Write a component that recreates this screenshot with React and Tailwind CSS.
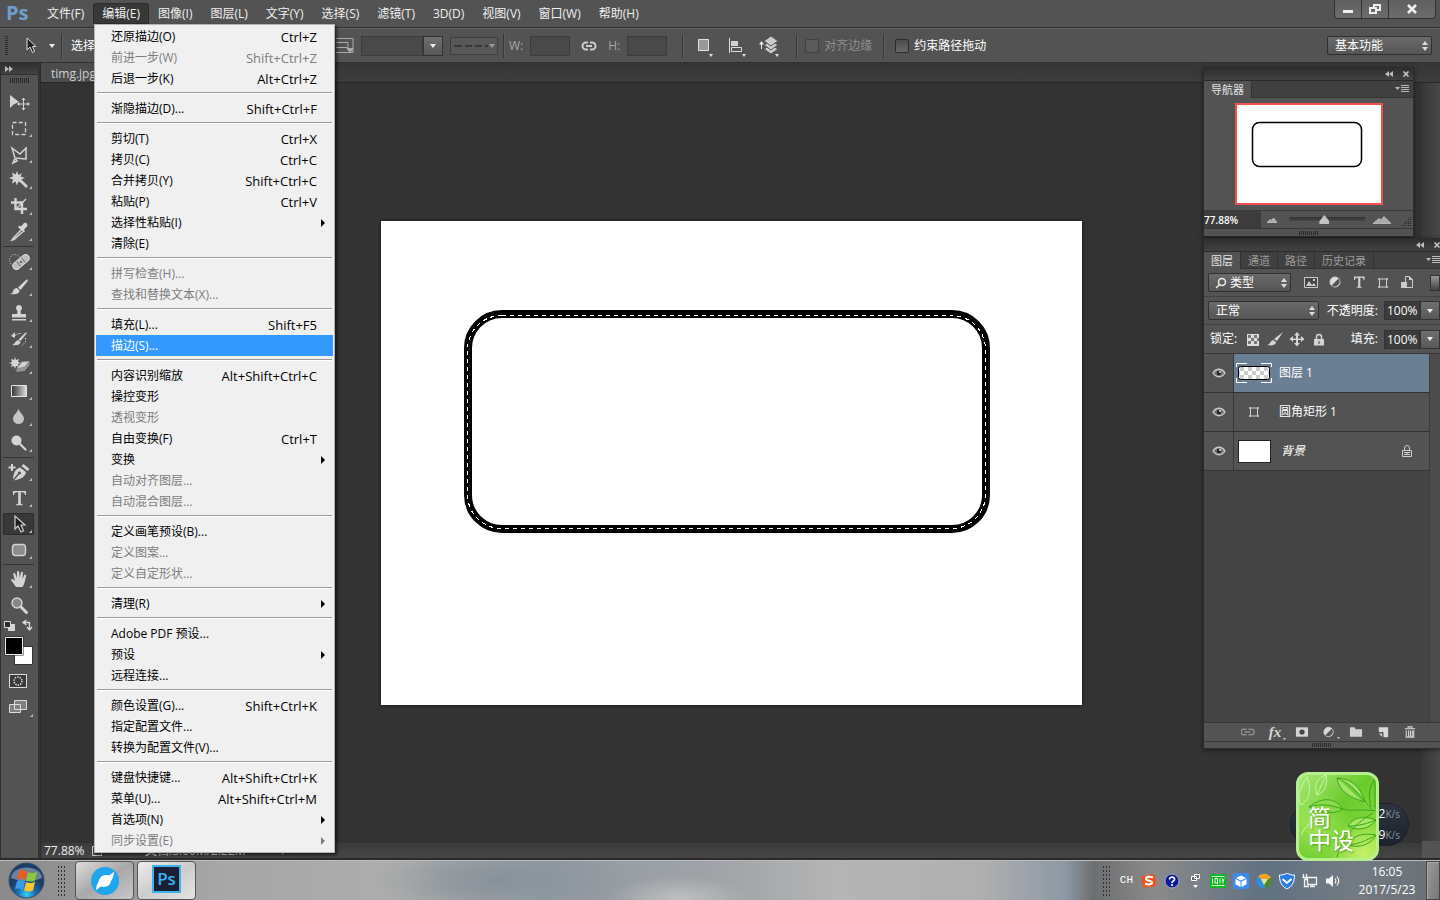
import { useState } from 'react'
import clsx from 'clsx'

const MENUS = ['文件(F)', '编辑(E)', '图像(I)', '图层(L)', '文字(Y)', '选择(S)', '滤镜(T)', '3D(D)', '视图(V)', '窗口(W)', '帮助(H)']

const EDIT_MENU = [
  [
    { label: '还原描边(O)', keys: 'Ctrl+Z' },
    { label: '前进一步(W)', keys: 'Shift+Ctrl+Z', disabled: true },
    { label: '后退一步(K)', keys: 'Alt+Ctrl+Z' },
  ],
  [{ label: '渐隐描边(D)...', keys: 'Shift+Ctrl+F' }],
  [
    { label: '剪切(T)', keys: 'Ctrl+X' },
    { label: '拷贝(C)', keys: 'Ctrl+C' },
    { label: '合并拷贝(Y)', keys: 'Shift+Ctrl+C' },
    { label: '粘贴(P)', keys: 'Ctrl+V' },
    { label: '选择性粘贴(I)', sub: true },
    { label: '清除(E)' },
  ],
  [
    { label: '拼写检查(H)...', disabled: true },
    { label: '查找和替换文本(X)...', disabled: true },
  ],
  [{ label: '填充(L)...', keys: 'Shift+F5' }, { label: '描边(S)...', active: true }],
  [
    { label: '内容识别缩放', keys: 'Alt+Shift+Ctrl+C' },
    { label: '操控变形' },
    { label: '透视变形', disabled: true },
    { label: '自由变换(F)', keys: 'Ctrl+T' },
    { label: '变换', sub: true },
    { label: '自动对齐图层...', disabled: true },
    { label: '自动混合图层...', disabled: true },
  ],
  [
    { label: '定义画笔预设(B)...' },
    { label: '定义图案...', disabled: true },
    { label: '定义自定形状...', disabled: true },
  ],
  [{ label: '清理(R)', sub: true }],
  [{ label: 'Adobe PDF 预设...' }, { label: '预设', sub: true }, { label: '远程连接...' }],
  [
    { label: '颜色设置(G)...', keys: 'Shift+Ctrl+K' },
    { label: '指定配置文件...' },
    { label: '转换为配置文件(V)...' },
  ],
  [
    { label: '键盘快捷键...', keys: 'Alt+Shift+Ctrl+K' },
    { label: '菜单(U)...', keys: 'Alt+Shift+Ctrl+M' },
    { label: '首选项(N)', sub: true },
    { label: '同步设置(E)', sub: true, disabled: true },
  ],
]

function Grip({ className }) {
  return (
    <span
      className={clsx(
        'block bg-[repeating-linear-gradient(90deg,#2a2a2a_0_1px,transparent_1px_2px)]',
        className,
      )}
    />
  )
}

function Divider() {
  return <span className="h-6 w-px shrink-0 bg-[#383838] shadow-[1px_0_0_#5e5e5e]" />
}

function UpDown({ className }) {
  return (
    <svg viewBox="0 0 6 10" className={clsx('pointer-events-none h-[10px] w-[6px] fill-[#dcdcdc]', className)}>
      <path d="M3 0 6 4H0zM3 10 6 6H0z" />
    </svg>
  )
}

function PanelSelect({ label, value, className, pad = 'pl-[7px]', children }) {
  return (
    <div className={clsx('relative flex h-[19px] items-center', className)}>
      {children}
      <select
        aria-label={label}
        className={clsx(
          'h-full w-full appearance-none rounded-xs border border-[#303030] bg-linear-to-b from-[#6a6a6a] to-[#555] pr-4 text-white outline-none',
          pad,
        )}
        defaultValue={value}
      >
        <option>{value}</option>
      </select>
      <UpDown className="absolute right-1" />
    </div>
  )
}

function MenuBar() {
  return (
    <header className="flex h-7 shrink-0 items-start border-b border-[#303030] bg-[#535353]">
      <span className="w-[39px] pl-1.5 text-xl leading-[26px] font-bold text-[#6f9fd0]">Ps</span>
      <nav className="flex flex-1 gap-0.5 pt-1">
        {MENUS.map((name) => (
          <button
            key={name}
            className={clsx(
              'h-[19px] shrink-0 rounded-t-xs px-2 leading-[19px] text-[#f0f0f0]',
              name === '编辑(E)' && 'bg-[#383838] shadow-[0_0_0_1px_#2e2e2e]',
            )}
          >
            {name}
          </button>
        ))}
      </nav>
      <div className="mr-1 flex h-[19px] divide-x divide-[#333] rounded-b-sm border border-t-0 border-[#333] bg-linear-to-b from-[#606060] to-[#6c6c6c]">
        <button aria-label="最小化" className="flex w-[27px] items-center justify-center">
          <svg viewBox="0 0 12 10" className="h-[10px] w-3 fill-[#eee]"><path d="M1 6h10v3H1z" /></svg>
        </button>
        <button aria-label="还原" className="flex w-[27px] items-center justify-center">
          <svg viewBox="0 0 12 10" className="h-[10px] w-3 fill-none stroke-[#eee] stroke-2">
            <path d="M5 5V1h6v5H8M1 4h6v5H1z" />
          </svg>
        </button>
        <button aria-label="关闭" className="flex w-[46px] items-center justify-center">
          <svg viewBox="0 0 12 10" className="h-[10px] w-3 stroke-[#eee] stroke-[2.6]"><path d="m2 1 8 8M10 1 2 9" /></svg>
        </button>
      </div>
    </header>
  )
}

function Tick() {
  return <svg viewBox="0 0 4 3" className="absolute right-0 bottom-0 h-[3px] w-1 fill-[#ddd]"><path d="M0 0h4L2 3z" /></svg>
}

function OptionsBar() {
  return (
    <section className="flex h-[35px] shrink-0 items-center border-t border-b border-t-[#646464] border-b-[#303030] bg-[#535353] pr-2">
      <span className="ml-[5px] h-[19px] w-[3px] bg-[repeating-linear-gradient(#2e2e2e_0_1px,transparent_1px_2px)]" />
      <button aria-label="路径选择工具" className="ml-[17px] flex w-[31px] items-center justify-between">
        <svg viewBox="0 0 12 18" className="h-[18px] w-3 fill-[#222] stroke-[#ddd]">
          <path d="M2 1v12l3-3 2.500 5.500 2-1L7.500 9.500H11z" />
        </svg>
        <svg viewBox="0 0 6 4" className="mr-px h-1 w-1.5 fill-[#eee]"><path d="M0 0h6L3 4z" /></svg>
      </button>
      <span className="mx-[5px] flex"><Divider /></span>
      <span className="w-[270px] shrink-0 pl-[4px] text-white">选择:</span>
      <svg viewBox="0 0 20 17" className="-ml-0.5 h-[17px] w-5 shrink-0 fill-none stroke-[#aaa]">
        <path d="M1 1.500h17v14H1M1 5.500h12v5H1" />
        <path d="M12 11.500h6l-3 4z" fill="#aaa" />
      </svg>
      <div className="ml-[6px] flex h-5 shrink-0">
        <input aria-label="描边宽度" className="w-[62px] border border-[#3c3c3c] bg-[#494949] px-1 text-white outline-none" />
        <button aria-label="描边宽度选项" className="flex w-5 items-center justify-center border border-[#333] bg-linear-to-b from-[#707070] to-[#585858]">
          <svg viewBox="0 0 6 4" className="h-1 w-1.5 fill-[#eee]"><path d="M0 0h6L3 4z" /></svg>
        </button>
      </div>
      <button aria-label="描边类型" className="ml-[7px] flex h-[18px] w-12 shrink-0 items-center justify-center rounded-xs border border-[#3e3e3e] bg-[#585858]">
        <svg viewBox="0 0 42 6" className="h-1.5 w-[42px] fill-[#999]">
          <path d="M1 2h8v2H1zM12 2h7v2h-7zM22 2h7v2h-7zM32 2h3v2h-3z" fill="#383838" />
          <path d="M36 1h6l-3 4z" />
        </svg>
      </button>
      <span className="mx-[5px] flex"><Divider /></span>
      <label className="flex shrink-0 items-center gap-[7px] text-[#a8a8a8]">
        W:
        <input className="h-5 w-10 border border-[#3c3c3c] bg-[#494949] text-white outline-none" />
      </label>
      <svg viewBox="0 0 16 10" className="mx-[11px] h-[10px] w-4 shrink-0 fill-none stroke-[#ccc] stroke-2">
        <path d="M7 1.500H5a3.500 3.500 0 0 0 0 7h2M9 1.500h2a3.500 3.500 0 0 1 0 7H9M5 5h6" />
      </svg>
      <label className="flex shrink-0 items-center gap-[7px] text-[#a8a8a8]">
        H:
        <input className="h-5 w-10 border border-[#3c3c3c] bg-[#494949] text-white outline-none" />
      </label>
      <span className="mr-[10px] ml-[15px] flex"><Divider /></span>
      <button aria-label="路径操作" className="relative h-[22px] w-5 shrink-0">
        <svg viewBox="0 0 20 20" className="h-5 w-5"><path d="M5.500 3.500h10v11h-10z" fill="#999" stroke="#e0e0e0" /></svg>
        <Tick />
      </button>
      <button aria-label="路径对齐方式" className="relative ml-[13px] h-[22px] w-5 shrink-0">
        <svg viewBox="0 0 20 20" className="h-5 w-5 fill-none stroke-[#ddd]">
          <path d="M3.500 2v15M5.500 5.500h6v4h-6z" fill="#ccc" /><path d="M5.500 11.500h10v4h-10z" />
        </svg>
        <Tick />
      </button>
      <button aria-label="路径排列方式" className="relative ml-[13px] h-[22px] w-5 shrink-0">
        <svg viewBox="0 0 20 20" className="h-5 w-5 fill-[#ccc] stroke-[#555]">
          <path d="m12 9 7 4-7 5-7-5z" /><path d="m12 5 7 4-7 5-7-5z" /><path d="m12 0 7 5-7 5-7-5z" />
          <path d="M0 8.500 2.500 5 5 8.500H3V13H2V8.500z" fill="#eee" stroke="none" />
        </svg>
        <Tick />
      </button>
      <span className="mr-[8px] ml-[17px] flex"><Divider /></span>
      <label className="flex shrink-0 items-center gap-[5px] text-[#8e8e8e]">
        <input type="checkbox" disabled className="h-3.5 w-3.5 appearance-none rounded-xs border border-[#404040] bg-[#5a5a5a]" />
        对齐边缘
      </label>
      <span className="mx-[11px] flex"><Divider /></span>
      <label className="flex shrink-0 items-center gap-[5px] text-white">
        <input type="checkbox" className="h-3.5 w-3.5 appearance-none rounded-xs border border-[#2c2c2c] bg-linear-to-b from-[#4c4c4c] to-[#686868]" />
        约束路径拖动
      </label>
      <div className="flex-1" />
      <PanelSelect label="工作区" value="基本功能" className="w-[105px]" />
    </section>
  )
}

const L = '#d4d4d4'

const TOOL_GROUPS = [
  [
    {
      name: '移动工具',
      plain: true,
      icon: (
        <>
          <path d="M3 5v13l3.500-3.500L12 12z" fill={L} />
          <path d="M16.500 9v10M11.500 14h10" stroke={L} fill="none" />
          <path d="m16.500 7.500 2 2.500h-4zM16.500 20.500l2-2.500h-4zM10 14l2.500-2v4zM23 14l-2.500-2v4z" fill={L} />
        </>
      ),
    },
    { name: '矩形选框工具', icon: <path d="M5.500 6.500h13v12h-13z" fill="none" stroke={L} strokeWidth="1.300" strokeDasharray="4 2.250" /> },
    {
      name: '多边形套索工具',
      icon: <path d="m5 6 8 6 6-6v11l-11-1zM8 16l2 3-4 2 1.500-4" fill="none" stroke={L} strokeWidth="1.500" />,
    },
    {
      name: '魔棒工具',
      icon: (
        <>
          <path d="m13 12 7 7" stroke={L} strokeWidth="2.600" />
          <path d="m10 3 1.500 4L15 5l-1.500 3.500L18 10l-4 1.500 1.500 4-4-2-1.500 4-1.500-4-3.500 2 1-4-4-1.500 4-1.500-1-4 3.500 2z" fill={L} />
        </>
      ),
    },
    {
      name: '裁剪工具',
      icon: <><path d="M8.500 4v11H20M4 8.500h11V20" fill="none" stroke={L} strokeWidth="2.400" /><path d="M9 15 19 5" stroke={L} strokeWidth="1.200" /></>,
    },
    {
      name: '吸管工具',
      icon: (
        <>
          <path d="m14 10-8 8.500-1 1.500 2-.5L15.500 12" fill="none" stroke={L} strokeWidth="1.500" />
          <path d="m11 7 1.500-1.500 1.500 1 2.500-3c2-2 5 .5 3.500 3l-3 3 1 1.500-1.500 1.500z" fill={L} />
        </>
      ),
    },
  ],
  [
    {
      name: '污点修复画笔工具',
      icon: (
        <>
          <circle cx="8" cy="11" r="5.500" fill="none" stroke={L} strokeDasharray="1 1.500" />
          <g transform="rotate(-40 14 13)">
            <rect x="4.500" y="9.500" width="19" height="7" rx="3.500" fill="#bbb" stroke="#e2e2e2" />
            <path d="M11 10v6M17 10v6" stroke="#777" />
            <circle cx="14" cy="13" r="1" fill="#555" />
          </g>
        </>
      ),
    },
    {
      name: '画笔工具',
      icon: <path d="M20.500 4.500c.8.600.3 1.500-.5 2.500l-6.500 8-2.500-2.500 8-7.500c.5-.5 1-.8 1.500-.5zM10 13l2.500 2.500c0 3-3 4.500-9.500 3.500 3-.5 2.500-2 3.500-4 .8-1.500 2.500-2.200 3.500-2z" fill={L} />,
    },
    {
      name: '仿制图章工具',
      icon: <path d="M12 4a3 3 0 0 1 2 5.300c-.6 1-.6 2 0 3.700h5v3.500H5V13h5c.6-1.700.6-2.700 0-3.700A3 3 0 0 1 12 4zM5 18h14v1.500H5z" fill={L} />,
    },
    {
      name: '历史记录画笔工具',
      icon: (
        <>
          <path d="m20 6-6.500 8-2-1.500 7-7zM11 13l2.500 2c0 2.500-3.500 4-8.500 3 2.500-.5 2.500-3 6-5zM4 9l4-4v3c3-2 6-2 8-1-4-.5-6 .5-8 2v2z" fill={L} />
          <path d="M18.500 11v4l-4 4" fill="none" stroke={L} strokeDasharray="1.500 1.500" />
        </>
      ),
    },
    {
      name: '橡皮擦工具',
      icon: (
        <>
          <path d="m8 4 1 3 3-1-1 3 3 1-3 1 1 3-3-1-1 3-1-3-3 1 1-3-3-1 3-1-1-3 3 1z" fill={L} />
          <path d="m15 8.500 7.500-.5-5 6.500-8 1z" fill="#d0d0d0" stroke="#5a5a5a" strokeWidth=".5" />
          <path d="m9.500 15.500 8-1 5-6.500v4l-5 6-8 1z" fill="#969696" />
        </>
      ),
    },
    {
      name: '渐变工具',
      icon: (
        <>
          <defs>
            <linearGradient id="tool-gradient"><stop stopColor="#333" /><stop offset="1" stopColor="#ddd" /></linearGradient>
          </defs>
          <path d="M4.500 6.500h15v11h-15z" fill="url(#tool-gradient)" stroke="#e4e4e4" />
        </>
      ),
    },
    { name: '模糊工具', icon: <path d="M11.500 4c2 4.500 5.500 6.500 5.500 9.500a5.500 5.500 0 0 1-11 0c0-3 3.500-5 5.500-9.500z" fill="#c4c4c4" /> },
    {
      name: '减淡工具',
      icon: <><circle cx="9.500" cy="9.500" r="5" fill={L} /><path d="m13 13 5.500 5.500" stroke={L} strokeWidth="2.200" strokeLinecap="round" /></>,
    },
  ],
  [
    {
      name: '钢笔工具',
      icon: (
        <>
          <path d="M1.500 7.500h7M5 4v7" stroke={L} strokeWidth="2" />
          <path d="m16.500 4 6 5-2 2-6-5zM13 7.500l6 4.500c-.5 4-4 7-12 8.500l5-6a1.500 1.500 0 1 0-1-1l-5 6c.5-6 2-10.500 7-12z" fill={L} />
        </>
      ),
    },
    {
      name: '横排文字工具',
      icon: <path d="M6 5h13v4h-1c-.3-2-1-2.700-3-2.700h-1.200V17c0 1 .5 1.200 2 1.300v.9H9v-.9c1.700-.1 2.200-.3 2.200-1.300V6.300H10C8 6.300 7.300 7 7 9H6z" fill={L} />,
    },
    {
      name: '路径选择工具',
      selected: true,
      icon: <path d="M8 4v13l3-3 3 6 2.500-1.200L14 13h4z" fill="#1e1e1e" stroke={L} strokeWidth="1.200" />,
    },
    { name: '圆角矩形工具', icon: <rect x="5.500" y="6.500" width="13" height="11" rx="3" fill="#8c8c8c" stroke={L} strokeWidth="1.400" /> },
  ],
  [
    {
      name: '抓手工具',
      icon: <path d="M9 20c-1.500-2.500-4-5-5-7.500 1.500-1.200 2.500.2 4 1.700L6.200 7c0-1.500 1.800-1.500 2.200 0l1.400 4L10 5c0-1.500 2-1.500 2.200 0l.5 6 1.300-5.500c.4-1.300 2-1 2 .3l-.6 6 2-3.800c.7-1.200 2-.5 1.700.7-1 4.500-1.300 7.800-3.600 11.300z" fill={L} />,
    },
    {
      name: '缩放工具',
      plain: true,
      icon: <><circle cx="10" cy="10" r="5" fill="#888" stroke={L} strokeWidth="1.400" /><path d="m14 14 5.500 5.500" stroke={L} strokeWidth="3" strokeLinecap="round" /></>,
    },
  ],
]

function ToolPanel() {
  return (
    <aside className="flex w-[38px] shrink-0 flex-col border-l border-[#303030] bg-[#535353]">
      <div className="h-3 shrink-0 border-b border-[#303030] bg-linear-to-b from-[#2e2e2e] to-[#424242] pl-1">
        <svg viewBox="0 0 8 6" className="mt-[3px] h-1.5 w-2 fill-[#bbb]"><path d="m0 0 4 3-4 3zM4 0l4 3-4 3z" /></svg>
      </div>
      <Grip className="mt-[3px] mb-2 ml-[9px] h-[5px] w-[19px] shrink-0" />
      {TOOL_GROUPS.map((group, index) => (
        <div
          key={group[0].name}
          className={clsx(
            'mr-[4px] ml-[2px] flex shrink-0 flex-col gap-1',
            index > 0 && 'mt-[3px] border-t border-[#333] pt-[3px]',
          )}
        >
          {group.map((tool) => (
            <button
              key={tool.name}
              aria-label={tool.name}
              className={clsx(
                'relative flex h-[22px] items-center justify-center rounded-xs',
                tool.selected && 'bg-[#383838] shadow-[inset_0_0_0_1px_#2b2b2b]',
              )}
            >
              <svg viewBox="0 0 24 24" className="h-6 w-6 shrink-0">{tool.icon}</svg>
              {!tool.plain && (
                <svg viewBox="0 0 4 4" className="absolute right-0.5 bottom-0.5 h-[3px] w-[3px] fill-[#bbb]"><path d="M4 0v4H0z" /></svg>
              )}
            </button>
          ))}
        </div>
      ))}
      <svg viewBox="1 0 37 50" className="mt-[3px] h-[50px] w-[37px] shrink-0">
        <path d="M8 5h7v7H8z" fill="#d6d6d6" />
        <path d="M4.500 2.500h6v6h-6z" fill="#2c2c2c" stroke="#ddd" />
        <path d="M24 3.500h5.500V10M26.500 1 23 3.500 26.500 6M27 8l2.500 3L32 8" fill="none" stroke="#ddd" strokeWidth="1.300" />
        <path d="M14.500 27.500h18v18h-18z" fill="#fff" stroke="#333" />
        <path d="M4.500 17.500h19v19h-19z" fill="#222" />
        <path d="M5.500 18.500h17v17h-17z" fill="#000" stroke="#eee" />
      </svg>
      <button aria-label="以快速蒙版模式编辑" className="mt-1 ml-[2px] flex h-4 w-[30px] items-center justify-center">
        <svg viewBox="0 0 18 14" className="h-3.5 w-[18px]">
          <path d="M.5.500h17v13H.5z" fill="#3a3a3a" stroke="#ddd" /><circle cx="9" cy="7" r="4" fill="none" stroke="#eee" strokeWidth="1.400" strokeDasharray="1.400 1.100" />
        </svg>
      </button>
      <button aria-label="更改屏幕模式" className="relative mt-[8px] ml-[2px] flex h-[20px] w-[30px] items-center justify-center">
        <svg viewBox="0 0 20 16" className="h-4 w-5 fill-[#808080] stroke-[#ddd]">
          <path d="M1.500 5.500h11v8h-11zM6.500 1.500h12v9h-12z" />
        </svg>
        <svg viewBox="0 0 4 4" className="absolute right-0 bottom-0 h-[3px] w-[3px] fill-[#bbb]"><path d="M4 0v4H0z" /></svg>
      </button>
    </aside>
  )
}

function Artboard() {
  return (
    <svg viewBox="0 0 701 484" className="h-[484px] w-[701px] bg-white shadow-[0_0_3px_#111]">
      <rect x="87" y="93" width="518" height="215" rx="34" fill="none" stroke="#000" strokeWidth="8" />
      <rect x="86.500" y="94.500" width="518" height="213" rx="34" fill="none" stroke="#fff" strokeDasharray="4 4" shapeRendering="crispEdges" />
    </svg>
  )
}

function DocumentArea() {
  return (
    <main className="ml-[2px] flex min-w-0 flex-1 flex-col border-l border-[#2c2c2c] bg-[#333]">
      <div className="flex h-5 shrink-0 border-b border-[#282828] bg-linear-to-b from-[#363636] to-[#3c3c3c]">
        <span className="w-40 bg-[#4c4c4c] pl-[10px] leading-[22px] text-[#d0d0d0]">timg.jpg</span>
      </div>
      <div className="flex min-h-0 flex-1">
        <div className="flex min-w-0 flex-1 flex-col">
          <div className="flex min-h-0 flex-1 items-center justify-center"><Artboard /></div>
          <div className="flex h-[15px] shrink-0 items-center bg-linear-to-b from-[#3c3c3c] to-[#454545] pl-[3px] leading-[15px] text-[#eee]">
            <span className="w-12">77.88%</span>
            <svg viewBox="0 0 10 10" className="h-[10px] w-[10px] fill-none stroke-[#ccc]"><path d="M.5.500h9v9h-9z" /></svg>
            <span className="ml-[43px]">文档:3.00M/2.22M</span>
            <svg viewBox="0 0 4 8" className="ml-9 h-2 w-1 fill-[#ccc]"><path d="m0 0 4 4-4 4z" /></svg>
          </div>
        </div>
        <div className="flex w-[18px] shrink-0 flex-col justify-end bg-linear-to-r from-[#383838] to-[#484848]">
          <span className="h-[17px] bg-[#535353]" />
        </div>
      </div>
    </main>
  )
}

function EditMenu() {
  return (
    <ul
      role="menu"
      className="absolute top-6 left-[94px] z-20 w-[241px] border border-[#b4b4b4] bg-[#f0f0f0] p-px text-black shadow-[2px_2px_3px_rgba(0,0,0,0.6)]"
    >
      {EDIT_MENU.map((group, index) => (
        <li key={group[0].label} role="none">
          {index > 0 && <hr className="mx-px mt-[3px] mb-1 h-[2px] border-t border-b-0 border-[#9a9a9a] bg-white" />}
          {group.map((item) => (
            <button
              key={item.label}
              role="menuitem"
              className={clsx(
                'flex h-[21px] w-full items-center pr-4 pl-[15px] text-left leading-5',
                item.disabled && 'text-[#7d7d7d]',
                item.active && 'bg-[#3399ff] text-white',
                item.sub && 'pt-px',
              )}
            >
              <span className="flex-1">{item.label}</span>
              {item.keys && <span className="text-[13px]">{item.keys}</span>}
              {item.sub && (
                <svg viewBox="0 0 4 8" className="-mr-2 h-2 w-1 fill-current"><path d="m0 0 4 4-4 4z" /></svg>
              )}
            </button>
          ))}
        </li>
      ))}
    </ul>
  )
}

function PanelHeader() {
  return (
    <div className="flex h-[13px] items-center justify-end gap-2.5 border-b border-[#2a2a2a] bg-linear-to-b from-[#2e2e2e] to-[#424242] pr-1">
      <button aria-label="折叠为图标"><svg viewBox="0 0 8 6" className="h-1.5 w-2 fill-[#bbb]"><path d="M4 0v6L0 3zM8 0v6L4 3z" /></svg></button>
      <button aria-label="关闭面板">
        <svg viewBox="0 0 6 6" className="h-1.5 w-1.5 stroke-[#ccc] stroke-[1.5]"><path d="m.5.500 5 5M5.500.500l-5 5" /></svg>
      </button>
    </div>
  )
}

function PanelTabs({ tabs }) {
  return (
    <div className="flex h-[17px] border-b border-[#333] bg-[#404040] text-[11px] leading-[15px]">
      {tabs.map((tab, index) => (
        <button
          key={tab}
          className={clsx(
            'shrink-0 border-r border-[#333] px-[7px]',
            index === 0 ? 'h-[17px] bg-[#535353] text-[#e4e4e4]' : 'text-[#9c9c9c]',
          )}
        >
          {tab}
        </button>
      ))}
      <button aria-label="面板菜单" className="mr-1 ml-auto">
        <svg viewBox="0 0 14 8" className="h-2 w-3.5 fill-[#bbb]"><path d="M0 2h5L2.500 5zM6 0h8v1H6zM6 2h8v1H6zM6 4h8v1H6zM6 6h8v1H6z" /></svg>
      </button>
    </div>
  )
}

function NavigatorPanel() {
  return (
    <section className="absolute top-[67px] right-[26px] z-10 w-[211px] border border-[#2c2c2c] bg-[#535353] shadow-[0_1px_4px_rgba(0,0,0,0.5)]">
      <PanelHeader />
      <PanelTabs tabs={['导航器']} />
      <div className="flex h-[112px] items-center justify-center">
        <svg viewBox="0 0 148 102" className="h-[102px] w-[148px]">
          <path d="M1 1h146v100H1z" fill="#fff" stroke="#f05050" strokeWidth="2" />
          <rect x="17.500" y="19.500" width="109" height="44" rx="7" fill="none" stroke="#000" strokeWidth="1.500" />
        </svg>
      </div>
      <div className="flex h-[18px] items-center border-t border-[#3a3a3a]">
        <input aria-label="缩放比例" defaultValue="77.88%" className="h-full w-[57px] bg-[#3c3c3c] text-[10px] font-semibold text-white outline-none" />
        <svg viewBox="0 0 10 6" className="ml-1.5 h-1.5 w-2.5 fill-[#aaa] stroke-[#ddd] stroke-[.6]"><path d="m0 5.500 3-3 1.500 1L6.500 1 10 5.500z" /></svg>
        <input
          type="range"
          aria-label="导航器缩放"
          defaultValue="46"
          className="mx-3 h-[10px] w-[76px] appearance-none bg-[linear-gradient(transparent_2px,#333_2px,#484848_6px,transparent_6px)] [&::-webkit-slider-thumb]:h-[9px] [&::-webkit-slider-thumb]:w-[10px] [&::-webkit-slider-thumb]:appearance-none [&::-webkit-slider-thumb]:bg-[#c4c4c4] [&::-webkit-slider-thumb]:[clip-path:polygon(50%_0,100%_70%,100%_100%,0_100%,0_70%)]"
        />
        <svg viewBox="0 0 18 8" className="-ml-1 h-2 w-[18px] fill-[#aaa] stroke-[#ddd] stroke-[.6]"><path d="m0 7.500 6-5 2 1.500 3-3.500 7 7z" /></svg>
        <svg viewBox="0 0 9 9" className="mt-1 mr-0.5 ml-auto h-[9px] w-[9px] fill-[#222]">
          <path d="M8 0h1v1H8zM6 2h1v1H6zM8 2h1v1H8zM4 4h1v1H4zM6 4h1v1H6zM8 4h1v1H8zM2 6h1v1H2zM4 6h1v1H4zM6 6h1v1H6zM8 6h1v1H8zM0 8h1v1H0zM2 8h1v1H2zM4 8h1v1H4zM6 8h1v1H6zM8 8h1v1H8z" />
        </svg>
      </div>
      <div className="flex h-[8px] items-center justify-center border-t border-[#383838]"><Grip className="h-1 w-5" /></div>
    </section>
  )
}

function PercentField({ label }) {
  return (
    <>
      <label className="ml-auto flex shrink-0 items-center gap-1.5 text-white">
        {label}
        <input defaultValue="100%" className="h-[19px] w-[36px] border border-[#333] bg-[#3c3c3c] pl-[2px] text-white outline-none" />
      </label>
      <button aria-label={`${label}选项`} className="flex h-[19px] w-5 shrink-0 items-center justify-center border border-[#333] bg-linear-to-b from-[#707070] to-[#585858]">
        <svg viewBox="0 0 6 4" className="h-1 w-1.5 fill-[#eee]"><path d="M0 0h6L3 4z" /></svg>
      </button>
    </>
  )
}

const PathShape = () => (
  <g fill="none" stroke="#d0d0d0">
    <path d="M3.500 4v8h7V4z" />
    <path d="M2.500 3.500h1v1h-1zM10.500 3.500h1v1h-1zM2.500 11.500h1v1h-1zM10.500 11.500h1v1h-1z" fill="#555" />
  </g>
)

const FILTERS = [
  { name: '像素图层', icon: <><path d="M.5 2.500h13v10H.5z" fill="#444" stroke="#ccc" /><path d="m2 11 3-5 3 4 2-2 2 3zM9 4h2v2H9z" fill="#ccc" /></> },
  { name: '调整图层', icon: <><circle cx="7" cy="7" r="5" fill="#ddd" stroke="#ccc" /><path d="M10.500 3.500a5 5 0 0 1-7 7z" fill="#555" /></> },
  { name: '文字图层', icon: <path d="M2 1.500h10.500V5h-.8c-.3-1.700-1-2.200-2.500-2.200H8.300V11c0 .8.300 1 1.500 1.100v.7H4.700v-.7C5.900 12 6.200 11.800 6.200 11V2.800h-.9C3.800 2.800 3.100 3.300 2.800 5H2z" fill="#d4d4d4" /> },
  { name: '形状图层', icon: <PathShape /> },
  { name: '智能对象', icon: <><path d="M5.500 1.500h4l3 3v8h-7z" fill="#555" stroke="#ccc" /><path d="M1 7h6v6H1zM9 1v4h4z" fill="#ccc" /></> },
]

const LOCKS = [
  {
    name: '锁定透明像素',
    icon: (
      <>
        <path d="M1 2h12v12H1z" fill="#ddd" />
        <path d="M2 3h3v3H2zM8 3h3v3H8zM5 6h3v3H5zM11 6h2v3h-2zM2 9h3v3H2zM8 9h3v3H8z" fill="#777" />
      </>
    ),
  },
  { name: '锁定图像像素', icon: <path d="m15 0-6 9-3-2zM5 8l3 2c0 3-4 4-9 3 3 0 3-4 6-5z" fill="#d4d4d4" /> },
  { name: '锁定位置', icon: <path d="m7 0 3 3.500H8v3h3V4l3.500 3-3.500 3V8H8v3h2l-3 3.500L4 11h2V8H3v2L-.5 7 3 4v2.500h3v-3H4z" fill="#d4d4d4" /> },
  { name: '锁定全部', icon: <><path d="M4.500 8V5a2.500 2.500 0 0 1 5 0v3" fill="none" stroke="#d4d4d4" strokeWidth="1.500" /><path d="M2 7h10v6.500H2z" fill="#d4d4d4" /><path d="M6.500 9h1v3h-1z" fill="#444" /></> },
]

const LAYERS = [
  { name: '图层 1', kind: 'pixels', selected: true },
  { name: '圆角矩形 1', kind: 'shape' },
  { name: '背景', kind: 'background' },
]

const LAYER_ACTIONS = [
  { name: '链接图层', icon: <path d="M6 4H3a3 3 0 0 0 0 6h3M8 4h3a3 3 0 0 1 0 6H8M4 7h6" fill="none" stroke="#8c8c8c" strokeWidth="1.600" /> },
  { name: '添加图层样式', text: 'fx' },
  { name: '添加图层蒙版', icon: <><path d="M1 2h13v10H1z" fill="#d4d4d4" /><circle cx="7.500" cy="7" r="2.800" fill="#444" /></> },
  { name: '新建调整图层', tick: true, icon: <><circle cx="7" cy="7" r="5" fill="#d8d8d8" stroke="#ccc" /><path d="M10.500 3.500a5 5 0 0 1-7 7z" fill="#555" /></> },
  { name: '创建新组', icon: <path d="M1 2h5l1 2h7v8H1z" fill="#d0d0d0" /> },
  { name: '创建新图层', icon: <path d="M3 2h10v10.500H8V7H3zM3 8.500h3.500v3.500z" fill="#d8d8d8" /> },
  { name: '删除图层', icon: <path d="M2 3.500h11M5.500 3V1.500h4V3M3.500 5v7.500h8V5M6 5.500V12M8 5.500V12M10 5.500V12" fill="none" stroke="#d4d4d4" strokeWidth="1.200" /> },
]

function LayerThumb({ kind }) {
  if (kind === 'shape') {
    return <svg viewBox="0 0 14 16" className="mr-[18px] ml-[11px] h-4 w-3.5"><PathShape /></svg>
  }
  if (kind === 'background') {
    return <span className="mr-[10px] ml-[2px] h-[23px] w-[33px] border border-[#222] bg-white" />
  }
  return (
    <svg viewBox="0 0 36 20" className="mr-[7px] h-5 w-9">
      <defs>
        <pattern id="checker" width="8" height="8" patternUnits="userSpaceOnUse">
          <path d="M0 0h8v8H0z" fill="#fff" /><path d="M0 0h4v4H0zM4 4h4v4H4z" fill="#ccc" />
        </pattern>
      </defs>
      <rect x="2.500" y="3.500" width="31" height="13" rx="2" fill="url(#checker)" stroke="#000" />
      <path d="M.5 4V.500H11M25 .500h10.500V4M.5 15v4.500H11M25 19.500h10.500V15" fill="none" stroke="#fff" />
    </svg>
  )
}

function LayersPanel() {
  const [layers] = useState(LAYERS)
  return (
    <section className="absolute top-[238px] right-0 z-10 w-[237px] overflow-hidden border border-r-0 border-[#2c2c2c] bg-[#535353] shadow-[0_1px_4px_rgba(0,0,0,0.5)]">
      <div className="-mr-1"><PanelHeader /></div>
      <div className="-mr-1"><PanelTabs tabs={['图层', '通道', '路径', '历史记录']} /></div>
      <div className="flex h-7 items-center border-b border-[#424242] pl-1">
        <PanelSelect label="图层过滤" value="类型" className="w-[83px]" pad="pl-[21px]">
          <svg viewBox="0 0 12 12" className="pointer-events-none absolute left-[7px] z-10 h-3 w-3 fill-none stroke-[#eee] stroke-[1.5]">
            <circle cx="7" cy="5" r="3.500" /><path d="M4.500 7.500 1 11" />
          </svg>
        </PanelSelect>
        <div className="ml-[13px] flex gap-[10px]">
          {FILTERS.map((filter) => (
            <button key={filter.name} aria-label={filter.name}>
              <svg viewBox="0 0 14 16" className="h-4 w-3.5">{filter.icon}</svg>
            </button>
          ))}
        </div>
        <button aria-label="打开图层过滤" className="ml-auto h-4 w-[10px] border border-[#333] bg-linear-to-b from-[#999] to-[#444]" />
      </div>
      <div className="flex h-7 items-center border-b border-[#424242] pl-1">
        <PanelSelect label="混合模式" value="正常" className="w-[111px]" />
        <PercentField label="不透明度:" />
      </div>
      <div className="flex h-7 items-center pl-[6px]">
        <span className="text-white">锁定:</span>
        <div className="ml-[9px] flex gap-[8px]">
          {LOCKS.map((lock) => (
            <button key={lock.name} aria-label={lock.name}>
              <svg viewBox="0 0 14 15" className="h-[15px] w-3.5 overflow-visible">{lock.icon}</svg>
            </button>
          ))}
        </div>
        <PercentField label="填充:" />
      </div>
      <div className="flex h-[369px] border-t border-[#383838] bg-[#444]">
        <ul className="min-w-0 flex-1">
          {layers.map((layer) => (
            <li key={layer.name} className="flex h-[39px] border-b border-[#333] bg-[#535353]">
              <button aria-label="显示图层" className="flex w-[30px] items-center justify-center border-r border-[#383838]">
                <svg viewBox="0 0 14 10" className="h-[10px] w-3.5">
                  <path d="M1 5c3-5 9-5 12 0-3 5-9 5-12 0z" fill="#777" stroke="#ccc" strokeWidth="1.300" />
                  <circle cx="7" cy="5" r="2.300" fill="#222" /><circle cx="8" cy="4" r="1" fill="#eee" />
                </svg>
              </button>
              <div className={clsx('flex flex-1 items-center pl-[2px] text-white', layer.selected && 'bg-[#6b7f94]')}>
                <LayerThumb kind={layer.kind} />
                <span className={clsx(layer.kind === 'background' && 'italic')}>{layer.name}</span>
                {layer.kind === 'background' && (
                  <svg viewBox="0 0 12 14" className="mr-4 ml-auto h-3.5 w-3 fill-none stroke-[#ccc]">
                    <path d="M3.500 6V4a2.500 2.500 0 0 1 5 0v2M1.500 6.500h9v6h-9zM6 8v3M3 8.500h6M3 10.500h6" />
                  </svg>
                )}
              </div>
            </li>
          ))}
        </ul>
        <span className="w-[11px] bg-[#4c4c4c] shadow-[inset_1px_0_0_#3c3c3c]" />
      </div>
      <div className="flex h-[19px] items-center justify-end gap-[13px] border-t border-[#383838] pr-[23px]">
        {LAYER_ACTIONS.map((action) => (
          <button key={action.name} aria-label={action.name} className="relative w-3.5">
            {action.text ? (
              <span className="block font-['Liberation_Serif',serif] text-[15px] leading-4 font-bold text-[#d4d4d4] italic">{action.text}</span>
            ) : (
              <svg viewBox="0 0 15 14" className="h-3.5 w-3.5">{action.icon}</svg>
            )}
            {(action.text || action.tick) && (
              <svg viewBox="0 0 4 3" className="absolute -right-1 bottom-0 h-[2px] w-[3px] fill-[#ddd]"><path d="M0 0h4L2 3z" /></svg>
            )}
          </button>
        ))}
      </div>
      <div className="flex h-[7px] items-center justify-center border-t border-[#383838]"><Grip className="h-1 w-5" /></div>
    </section>
  )
}

function DesktopWidget() {
  return (
    <div className="absolute right-[31px] bottom-[39px] z-30 h-[89px] w-[119px]">
      <div className="absolute top-[31px] h-[43px] w-[119px] rounded-full border border-[#1b222c] bg-linear-to-b from-[#2c3440] to-[#1c232e] pr-2 text-right leading-[21px] text-[#8b929b]">
        <p className="text-[10px]"><span className="text-xs text-white">2</span>K/s</p>
        <p className="text-[10px]"><span className="text-xs text-white">9</span>K/s</p>
      </div>
      <div className="absolute left-[6px] h-[89px] w-[83px] overflow-hidden rounded-xl border-[3px] border-[#b5f08c] bg-[radial-gradient(circle_at_85%_95%,#c6f06a,transparent_35%),radial-gradient(circle_at_20%_60%,#a4e65a,transparent_45%),linear-gradient(135deg,#a9e878,#6acb2c_45%,#8fdf45)]">
        <svg viewBox="0 0 77 83" className="absolute inset-0 h-full w-full fill-none stroke-[#3da51f]">
          <path d="M80 36C60 34 50 36 44 34 34 20 20 24 10 32c12 6 24 8 34 2M10 32c12-4 22-2 34 2" fill="#8ddb4c" />
          <path d="M66 27C60 8 50 4 38 3c2 14 14 20 28 24zM38 3c10 4 20 12 28 24l8 9" fill="#a3e468" />
          <path d="M76 4c-6 8-7 16-4 28M76 4v30" />
          <path d="M77 45c-14-5-23-2-28 6 11 6 22 2 28-6zM49 51c10 0 18-2 28-6" fill="#a8e666" />
          <path d="M77 60c-14-3-26 2-28 10 13 4 24-2 28-10zM49 70c10-1 18-4 28-10M38 82c6-20 16-32 36-44" />
          <path d="M18 20C14 8 20 2 27 0c2 10-2 18-9 20zM18 20 27 0M2 30C12 24 12 12 8 2M2 30c-4-8-2-16 6-28M2 60c4-8 8-12 14-14" stroke="#c8f5a0" />
        </svg>
        <p className="absolute top-[31px] left-[9px] text-[23px] leading-[23px] text-white [text-shadow:1px_1px_2px_#5a9a2a]">
          简<br />中设
        </p>
      </div>
    </div>
  )
}

const TRAY = [
  {
    name: '搜狗输入法',
    icon: <><rect x="1" y="2" width="14" height="12" rx="3" fill="#f4511e" transform="rotate(-8 8 8)" /><path d="M12 4.500C8 3 4.500 4 5 6s6 1.500 6 3.500-4 2.500-7 1" fill="none" stroke="#fff" strokeWidth="2.200" /></>,
  },
  {
    name: '帮助',
    icon: <><circle cx="8" cy="8" r="7" fill="#0a1a9c" stroke="#aab" /><path d="M5.500 6.500C5.500 3 11 3.500 10.500 6.500 10.200 8 8 8 8 10M8 11v2" fill="none" stroke="#fff" strokeWidth="1.700" /></>,
  },
  { name: '显示隐藏的图标', icon: <><path d="M7.500 1.500h5v4h-5zM4.500 3.500h5v4h-5z" fill="#666" stroke="#fff" /><path d="M6 12h5l-2.500 3z" fill="#fff" /></> },
  {
    name: '爱奇艺',
    icon: <><path d="M0 1h16v14H0z" fill="#0bbb1b" /><path d="M1.500 3.500h13M1.500 12.500h13M2.500 5.500v5M5 5.500h2.500v4.500H5zM7 10l1 1M10 5.500v5M12 5.500l1 2.500 1-2.500M13 8v2.500" fill="none" stroke="#eaffea" /></>,
  },
  {
    name: '应用中心',
    icon: <><rect width="16" height="16" rx="3" fill="#3b8cf0" /><path d="m8 2.500 5 2.500-5 2.500L3 5zM2.500 6 7.500 8.500V14l-5-2.700zM13.500 6l-5 2.500V14l5-2.700z" fill="#fff" /></>,
  },
  {
    name: '影音',
    icon: <><circle cx="8" cy="8" r="7.500" fill="#2f8de0" /><path d="M2 3.500C6-1 13 0 15 5L8 8z" fill="#f9a11b" /><path d="M15 5c2 5-2 10-6 10.500L8 8z" fill="#4d8a22" /><path d="M5 6h7l-4 6z" fill="#d8e8a0" /></>,
  },
  {
    name: '安全卫士',
    icon: <><path d="M8 0c3 2 5 2 7.500 2 0 7-2 11-7.500 14C2.500 13 .5 9 .5 2 3 2 5 2 8 0z" fill="#2b7bea" stroke="#fff" /><path d="m3.500 6 4.500 4 4.500-4" fill="none" stroke="#fff" strokeWidth="2" /></>,
  },
  { name: '网络', icon: <path d="M5.500 4.500h9v7h-9zM8 13.500h5M10.500 12v2M1.500 1v3M4.500 1v3M.5 4.500h4v2h-2v7H7" fill="none" stroke="#f4f4f4" strokeWidth="1.300" /> },
  { name: '音量', icon: <><path d="M1 5.500h3L8 2v12l-4-3.500H1z" fill="#f4f4f4" /><path d="M10 5.500c1 1.500 1 3.500 0 5M12 3.500c2 2.700 2 6.300 0 9" fill="none" stroke="#f4f4f4" strokeWidth="1.200" /></> },
]

function Taskbar() {
  return (
    <footer className="flex h-10 shrink-0 items-center border-t border-[#bdbdbd] bg-[radial-gradient(ellipse_70px_24px_at_680px_100%,#c0c0c0,transparent),radial-gradient(ellipse_130px_40px_at_500px_50%,#88929a,transparent),linear-gradient(90deg,#8a8a8a,#a6a6a6_15%,#aeaeae_28%,#929aa2_38%,#a0a4a8_50%,#b4b4b4_58%,#b0b0b0_68%,#8c98a4_74%,#6c6e70_76%,#8a8a8a_80%,#607182_88%,#737b82_94%,#6a7076)]">
      <button aria-label="开始" className="ml-2 h-[37px] w-[37px] shrink-0">
        <svg viewBox="0 0 37 37" className="h-[37px] w-[37px]">
          <defs>
            <radialGradient id="orb" cy=".9"><stop stopColor="#35d0f8" /><stop offset=".5" stopColor="#1a6fae" /><stop offset="1" stopColor="#1d3f66" /></radialGradient>
          </defs>
          <circle cx="18.500" cy="18.500" r="17.500" fill="url(#orb)" stroke="#38506a" />
          <path d="M3 16C4 2 33 2 34 16c-9 4-22 4-31 0z" fill="#fff" opacity=".35" />
          <path d="M11 9c3-2 5-1 8 .5L17 18c-3-2-6-2-8-.5z" fill="#ee5a24" />
          <path d="M20 10c3 1.500 6 1.500 9-.5l-2 9c-3 1.500-6 1-9 0z" fill="#8cc63e" />
          <path d="M9 19c3-1.500 5-1 8 .5L15 28c-3-2-6-2-8-.5z" fill="#3f9be8" />
          <path d="M18 20c3 1.500 6 1.500 9-.5l-2 9c-3 1.500-6 1-9 0z" fill="#fbc52c" />
        </svg>
      </button>
      <span className="mr-[9px] ml-3 h-[31px] w-[9px] shrink-0 bg-[radial-gradient(circle,#333_1px,transparent_1px)] bg-[size:3px_4px]" />
      <button aria-label="浏览器" className="flex h-[39px] w-[59px] shrink-0 items-center justify-center rounded-sm border border-[#555] bg-linear-to-br from-[#ddd] via-[#a8a8a8] to-[#c8c8c8]">
        <svg viewBox="0 0 28 28" className="h-7 w-7">
          <circle cx="14" cy="14" r="14" fill="#1fa6ee" />
          <path d="M23 5c-.5 5-1.500 7-3 9-.5 5-6 7-10 5.500L5 23c.5-5 1.500-7 3-9 .5-5 6-7 10-5.500z" fill="#fff" />
        </svg>
      </button>
      <button aria-label="Photoshop" className="ml-[3px] flex h-[39px] w-[59px] shrink-0 items-start justify-center rounded-sm border border-[#555] bg-linear-to-br from-[#eee] via-[#ccc] to-[#e4e4e4] pt-[3px]">
        <span className="flex h-7 w-[29px] items-center justify-center border-2 border-[#3cb4ee] bg-[#1a1f35] text-[17px] leading-6 font-semibold text-[#35b5f2]">Ps</span>
      </button>
      <div className="flex-1" />
      <span className="h-[31px] w-[9px] shrink-0 bg-[radial-gradient(circle,#333_1px,transparent_1px)] bg-[size:3px_4px]" />
      <span className="mr-2 ml-[9px] font-['Liberation_Mono',monospace] text-[11px] text-white">CH</span>
      <div className="flex shrink-0 gap-2">
        {TRAY.map((item) => (
          <button key={item.name} aria-label={item.name} className="w-[15px]">
            <svg viewBox="0 0 16 16" className="h-4 w-4">{item.icon}</svg>
          </button>
        ))}
      </div>
      <div className="mr-px ml-[9px] w-[76px] shrink-0 text-center leading-[18px] text-white">
        <p>16:05</p>
        <p>2017/5/23</p>
      </div>
      <button aria-label="显示桌面" className="h-[39px] w-3.5 shrink-0 border border-[#444] bg-linear-to-br from-[#999] to-[#777] shadow-[inset_1px_1px_0_#aaa]" />
    </footer>
  )
}

export default function App() {
  return (
    <div
      lang="zh-CN"
      className="relative flex h-screen flex-col overflow-hidden bg-[#333] font-['Open_Sans','Noto_Sans_CJK_SC',sans-serif] text-xs select-none"
    >
      <MenuBar />
      <OptionsBar />
      <div className="flex min-h-0 flex-1 border-b-2 border-[#2a2a2a]">
        <ToolPanel />
        <DocumentArea />
      </div>
      <Taskbar />
      <EditMenu />
      <NavigatorPanel />
      <LayersPanel />
      <DesktopWidget />
    </div>
  )
}
